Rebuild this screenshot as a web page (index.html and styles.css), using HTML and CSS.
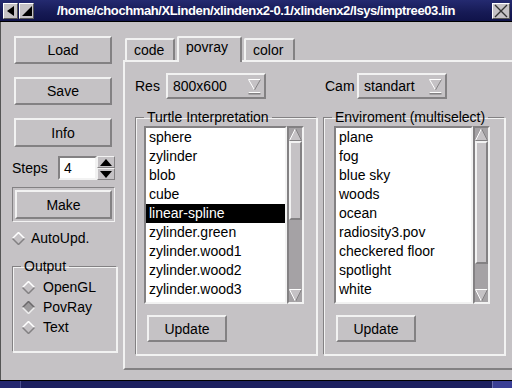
FILE: index.html
```html
<!DOCTYPE html>
<html>
<head>
<meta charset="utf-8">
<link rel="stylesheet" href="styles.css">
</head>
<body>
<div class="win">
  <div class="titlebar">
    <div class="tb-btns">
      <span class="tbb"><svg width="12" height="12" viewBox="0 0 12 12"><polygon points="2,6 9,1 9,11" fill="#000"/></svg></span>
      <span class="tbb"><svg width="12" height="12" viewBox="0 0 12 12"><polygon points="1,1 11,11 1,11" fill="#000" transform="translate(12,0) scale(-1,1)"/></svg></span>
    </div>
    <div class="title">/home/chochmah/XLinden/xlindenx2-0.1/xlindenx2/lsys/imptree03.lin</div>
    <span class="tbb close"><svg width="14" height="14" viewBox="0 0 14 14"><path d="M1 1 L13 13 M13 1 L1 13" stroke="#333" stroke-width="1.4" fill="none"/></svg></span>
  </div>
  <div class="main">
    <div class="left">
      <div class="btn big">Load</div>
      <div class="btn big">Save</div>
      <div class="btn big">Info</div>
      <div class="steps">
        <span class="lbl">Steps</span>
        <div class="spin-input">4</div>
        <div class="spin-arrows">
          <div class="sa"><svg width="14" height="9" viewBox="0 0 14 9"><polygon points="7,1 13,8 1,8" fill="#000"/></svg></div>
          <div class="sa"><svg width="14" height="9" viewBox="0 0 14 9"><polygon points="1,1 13,1 7,8" fill="#000"/></svg></div>
        </div>
      </div>
      <div class="default-frame"><div class="btn make">Make</div></div>
      <div class="radio auto">
        <svg class="dia" width="13" height="13" viewBox="0 0 13 13"><polygon points="6.5,0.5 12.5,6.5 6.5,12.5 0.5,6.5" fill="#c5c2c5"/><path d="M0.5 6.5 L6.5 0.5 L12.5 6.5" stroke="#fff" stroke-width="1.5" fill="none"/><path d="M0.5 6.5 L6.5 12.5 L12.5 6.5" stroke="#838183" stroke-width="1.5" fill="none"/></svg>
        <span>AutoUpd.</span>
      </div>
      <fieldset class="group out">
        <legend>Output</legend>
        <div class="radio">
          <svg class="dia" width="13" height="13" viewBox="0 0 13 13"><polygon points="6.5,0.5 12.5,6.5 6.5,12.5 0.5,6.5" fill="#c5c2c5"/><path d="M0.5 6.5 L6.5 0.5 L12.5 6.5" stroke="#fff" stroke-width="1.5" fill="none"/><path d="M0.5 6.5 L6.5 12.5 L12.5 6.5" stroke="#838183" stroke-width="1.5" fill="none"/></svg>
          <span>OpenGL</span>
        </div>
        <div class="radio">
          <svg class="dia" width="13" height="13" viewBox="0 0 13 13"><polygon points="6.5,0.5 12.5,6.5 6.5,12.5 0.5,6.5" fill="#9c9a9c"/><path d="M0.5 6.5 L6.5 0.5 L12.5 6.5" stroke="#6b696b" stroke-width="1.5" fill="none"/><path d="M0.5 6.5 L6.5 12.5 L12.5 6.5" stroke="#eee" stroke-width="1.5" fill="none"/></svg>
          <span>PovRay</span>
        </div>
        <div class="radio">
          <svg class="dia" width="13" height="13" viewBox="0 0 13 13"><polygon points="6.5,0.5 12.5,6.5 6.5,12.5 0.5,6.5" fill="#c5c2c5"/><path d="M0.5 6.5 L6.5 0.5 L12.5 6.5" stroke="#fff" stroke-width="1.5" fill="none"/><path d="M0.5 6.5 L6.5 12.5 L12.5 6.5" stroke="#838183" stroke-width="1.5" fill="none"/></svg>
          <span>Text</span>
        </div>
      </fieldset>
    </div>
    <div class="right">
      <div class="tabs">
        <div class="tab">code</div>
        <div class="tab active">povray</div>
        <div class="tab">color</div>
      </div>
      <div class="panel">
        <div class="col turtle">
          <div class="combo-row">
            <span class="lbl">Res</span>
            <div class="combo res"><span>800x600</span>
              <svg class="ind" width="13" height="16" viewBox="0 0 13 16"><polygon points="0.5,0.5 12.5,0.5 6.5,11" fill="#c5c2c5"/><path d="M0.5 0.5 L12.5 0.5 M0.5 0.5 L6.5 11" stroke="#fff" stroke-width="1" fill="none"/><path d="M12.5 0.5 L6.5 11" stroke="#838183" stroke-width="1" fill="none"/><rect x="0.5" y="13" width="12" height="2.5" fill="#838183"/><rect x="0.5" y="13" width="12" height="1" fill="#fff"/></svg>
            </div>
          </div>
          <fieldset class="group lgroup">
            <legend>Turtle Interpretation</legend>
            <div class="listbox">
              <div class="list">
                <div class="row">sphere</div>
                <div class="row">zylinder</div>
                <div class="row">blob</div>
                <div class="row">cube</div>
                <div class="row sel">linear-spline</div>
                <div class="row">zylinder.green</div>
                <div class="row">zylinder.wood1</div>
                <div class="row">zylinder.wood2</div>
                <div class="row">zylinder.wood3</div>
                <div class="row">zylinder.wood4</div>
              </div>
              <div class="sbar">
                <svg class="arr" width="13" height="13" viewBox="0 0 13 13"><polygon points="6.5,0.5 12.5,12.5 0.5,12.5" fill="#c5c2c5"/><path d="M0.5 12.5 L6.5 0.5" stroke="#fff" fill="none"/><path d="M6.5 0.5 L12.5 12.5 L0.5 12.5" stroke="#838183" fill="none"/></svg>
                <div class="thumb t1"></div>
                <div class="trough"></div>
                <svg class="arr" width="13" height="13" viewBox="0 0 13 13"><polygon points="0.5,0.5 12.5,0.5 6.5,12.5" fill="#c5c2c5"/><path d="M0.5 0.5 L12.5 0.5 M0.5 0.5 L6.5 12.5" stroke="#fff" fill="none"/><path d="M12.5 0.5 L6.5 12.5" stroke="#838183" fill="none"/></svg>
              </div>
            </div>
            <div class="btn upd">Update</div>
          </fieldset>
        </div>
        <div class="col env">
          <div class="combo-row">
            <span class="lbl">Cam</span>
            <div class="combo cam"><span>standart</span>
              <svg class="ind" width="13" height="16" viewBox="0 0 13 16"><polygon points="0.5,0.5 12.5,0.5 6.5,11" fill="#c5c2c5"/><path d="M0.5 0.5 L12.5 0.5 M0.5 0.5 L6.5 11" stroke="#fff" stroke-width="1" fill="none"/><path d="M12.5 0.5 L6.5 11" stroke="#838183" stroke-width="1" fill="none"/><rect x="0.5" y="13" width="12" height="2.5" fill="#838183"/><rect x="0.5" y="13" width="12" height="1" fill="#fff"/></svg>
            </div>
          </div>
          <fieldset class="group lgroup">
            <legend>Enviroment (multiselect)</legend>
            <div class="listbox">
              <div class="list">
                <div class="row">plane</div>
                <div class="row">fog</div>
                <div class="row">blue sky</div>
                <div class="row">woods</div>
                <div class="row">ocean</div>
                <div class="row">radiosity3.pov</div>
                <div class="row">checkered floor</div>
                <div class="row">spotlight</div>
                <div class="row">white</div>
                <div class="row">radiosity</div>
              </div>
              <div class="sbar">
                <svg class="arr" width="13" height="13" viewBox="0 0 13 13"><polygon points="6.5,0.5 12.5,12.5 0.5,12.5" fill="#c5c2c5"/><path d="M0.5 12.5 L6.5 0.5" stroke="#fff" fill="none"/><path d="M6.5 0.5 L12.5 12.5 L0.5 12.5" stroke="#838183" fill="none"/></svg>
                <div class="thumb t2"></div>
                <div class="trough"></div>
                <svg class="arr" width="13" height="13" viewBox="0 0 13 13"><polygon points="0.5,0.5 12.5,0.5 6.5,12.5" fill="#c5c2c5"/><path d="M0.5 0.5 L12.5 0.5 M0.5 0.5 L6.5 12.5" stroke="#fff" fill="none"/><path d="M12.5 0.5 L6.5 12.5" stroke="#838183" fill="none"/></svg>
              </div>
            </div>
            <div class="btn upd">Update</div>
          </fieldset>
        </div>
      </div>
    </div>
  </div>
  <div class="bottombar"><span class="bb1"></span><span class="bb2"></span><span class="bb3"></span></div>
</div>
</body>
</html>
```

FILE: styles.css
```css
* { box-sizing: border-box; }
html, body { margin: 0; padding: 0; }
body {
  width: 512px; height: 388px; overflow: hidden;
  font-family: "Liberation Sans", Arial, sans-serif;
  font-size: 14px; color: #000; background: #c5c2c5;
}
.win { width: 512px; height: 388px; display: flex; flex-direction: column; }

.titlebar {
  height: 22px; flex: none;
  background: linear-gradient(#242a70, #161a55 60%, #10134a);
  border-bottom: 1px solid #000;
  display: flex; align-items: center; padding: 0 2px 0 3px;
}
.tb-btns { display: flex; gap: 1px; flex: none; }
.tbb {
  width: 15px; height: 16px; background: #c5c2c5; flex: none;
  border: 1px solid; border-color: #fff #555 #555 #fff;
  display: flex; align-items: center; justify-content: center;
}
.title {
  flex: 1; min-width: 0; overflow: hidden; color: #fff; font-weight: bold; font-size: 13px;
  padding-left: 23px; white-space: nowrap; letter-spacing: -0.4px;
}
.close { width: 18px; }

.main {
  flex: 1; display: flex; border-left: 1px solid #555; min-height: 0;
}
.left {
  width: 122px; flex: none; padding: 14px 0 0 11px;
  display: flex; flex-direction: column;
}
.btn {
  background: #c5c2c5;
  border: 2px solid; border-color: #f2f2f2 #838183 #838183 #f2f2f2;
  display: flex; align-items: center; justify-content: center;
}
.big { width: 98px; height: 28px; margin: 0 0 13px 2px; }
.big:nth-child(3) { height: 29px; margin-bottom: 9px; }

.steps { display: flex; align-items: center; height: 24px; }
.steps .lbl { width: 46px; }
.spin-input {
  width: 39px; height: 24px; background: #fff;
  border: 2px solid; border-color: #838183 #f2f2f2 #f2f2f2 #838183;
  padding-left: 4px; line-height: 20px;
}
.spin-arrows { display: flex; flex-direction: column; width: 18px; height: 24px; }
.sa {
  height: 12px; background: #c5c2c5;
  border: 1px solid; border-color: #f2f2f2 #838183 #838183 #f2f2f2;
  display: flex; align-items: center; justify-content: center;
}

.default-frame {
  width: 103px; height: 35px; margin-top: 7px;
  border: 1px solid; border-color: #838183 #f2f2f2 #f2f2f2 #838183;
  padding: 2px;
}
.make { height: 100%; }

.radio { display: flex; align-items: center; gap: 6px; height: 20px; }
.radio .dia { flex: none; }
.auto { margin-top: 6px; height: 20px; }

.group {
  margin: 0;
  border: 1px solid; border-color: #838183 #f2f2f2 #f2f2f2 #838183;
  box-shadow: 1px 1px 0 #f2f2f2, inset 1px 1px 0 #f2f2f2;
}
.group legend { padding: 0 3px; line-height: 16px; }
.out {
  width: 105px; height: 94px; margin-top: 10px; padding: 3px 0 0 9px;
}
.out legend { margin-left: -1px; }
.out .radio { gap: 8px; }

.right { flex: 1; padding-top: 13px; display: flex; flex-direction: column; min-width: 0; }
.tabs { display: flex; align-items: flex-end; height: 25px; padding-left: 2px; gap: 2px; }
.tab {
  height: 22px; background: #c5c2c5;
  border: 2px solid; border-bottom: none;
  border-color: #f2f2f2 #838183 #838183 #f2f2f2;
  border-radius: 2px 2px 0 0;
  padding: 0 7px; line-height: 20px;
}
.tab:first-child { width: 50px; }
.tab.active { height: 26px; width: 65px; line-height: 18px; margin-bottom: -2px; position: relative; z-index: 1; }
.tab:last-child { width: 51px; }

.panel {
  height: 310px; width: 400px;
  border: 2px solid; border-color: #f2f2f2 #838183 #838183 #f2f2f2;
  display: grid; grid-template-columns: 182px 182px; column-gap: 6px;
  padding: 11px 0 0 10px;
}
.combo-row { display: flex; align-items: center; height: 26px; }
.combo-row .lbl { width: 31px; }
.env .combo-row .lbl { width: 34px; padding-left: 2px; }
.combo {
  height: 26px; display: flex; align-items: center; justify-content: space-between;
  border: 2px solid; border-color: #f2f2f2 #838183 #838183 #f2f2f2;
  padding: 0 3px 0 5px;
}
.combo.res { width: 100px; }
.combo.cam { width: 90px; }
.combo .ind { margin-top: 2px; }

.lgroup { margin-top: 10px; height: 246px; padding: 0; }
.lgroup legend { margin-left: 8px; }
.listbox { display: flex; width: 160px; height: 178px; margin: 1px 0 0 8px; }
.env .listbox { width: 156px; margin-left: 10px; }
.list {
  flex: 1; background: #fff; overflow: hidden;
  border: 2px solid; border-color: #838183 #f2f2f2 #f2f2f2 #838183;
}
.row { height: 19px; line-height: 19px; padding-left: 3px; white-space: nowrap; }
.row.sel { background: #000; color: #fff; margin-left: -1px; padding-left: 4px; }
.sbar {
  width: 17px; flex: none; background: #a5a2a5;
  border: 2px solid; border-color: #838183 #f2f2f2 #f2f2f2 #838183;
  display: flex; flex-direction: column;
}
.sbar .arr { flex: none; }
.thumb {
  flex: none; background: #c5c2c5;
  border: 2px solid; border-color: #f2f2f2 #838183 #838183 #f2f2f2;
}
.t1 { height: 79px; }
.t2 { height: 123px; }
.trough { flex: 1; }
.upd { width: 80px; height: 27px; margin: 11px 0 0 11px; }
.env .upd { margin-left: 12px; }

.bottombar {
  height: 8px; flex: none; border-top: 1px solid #000;
  display: flex; background: #1c2060;
}
.bb1 { width: 21px; background: #242870; border-right: 1px solid #4a4e90; }
.bb2 { flex: 1; }
.bb3 { width: 20px; background: #3a3f95; border-left: 1px solid #6a6eb0; }
```
